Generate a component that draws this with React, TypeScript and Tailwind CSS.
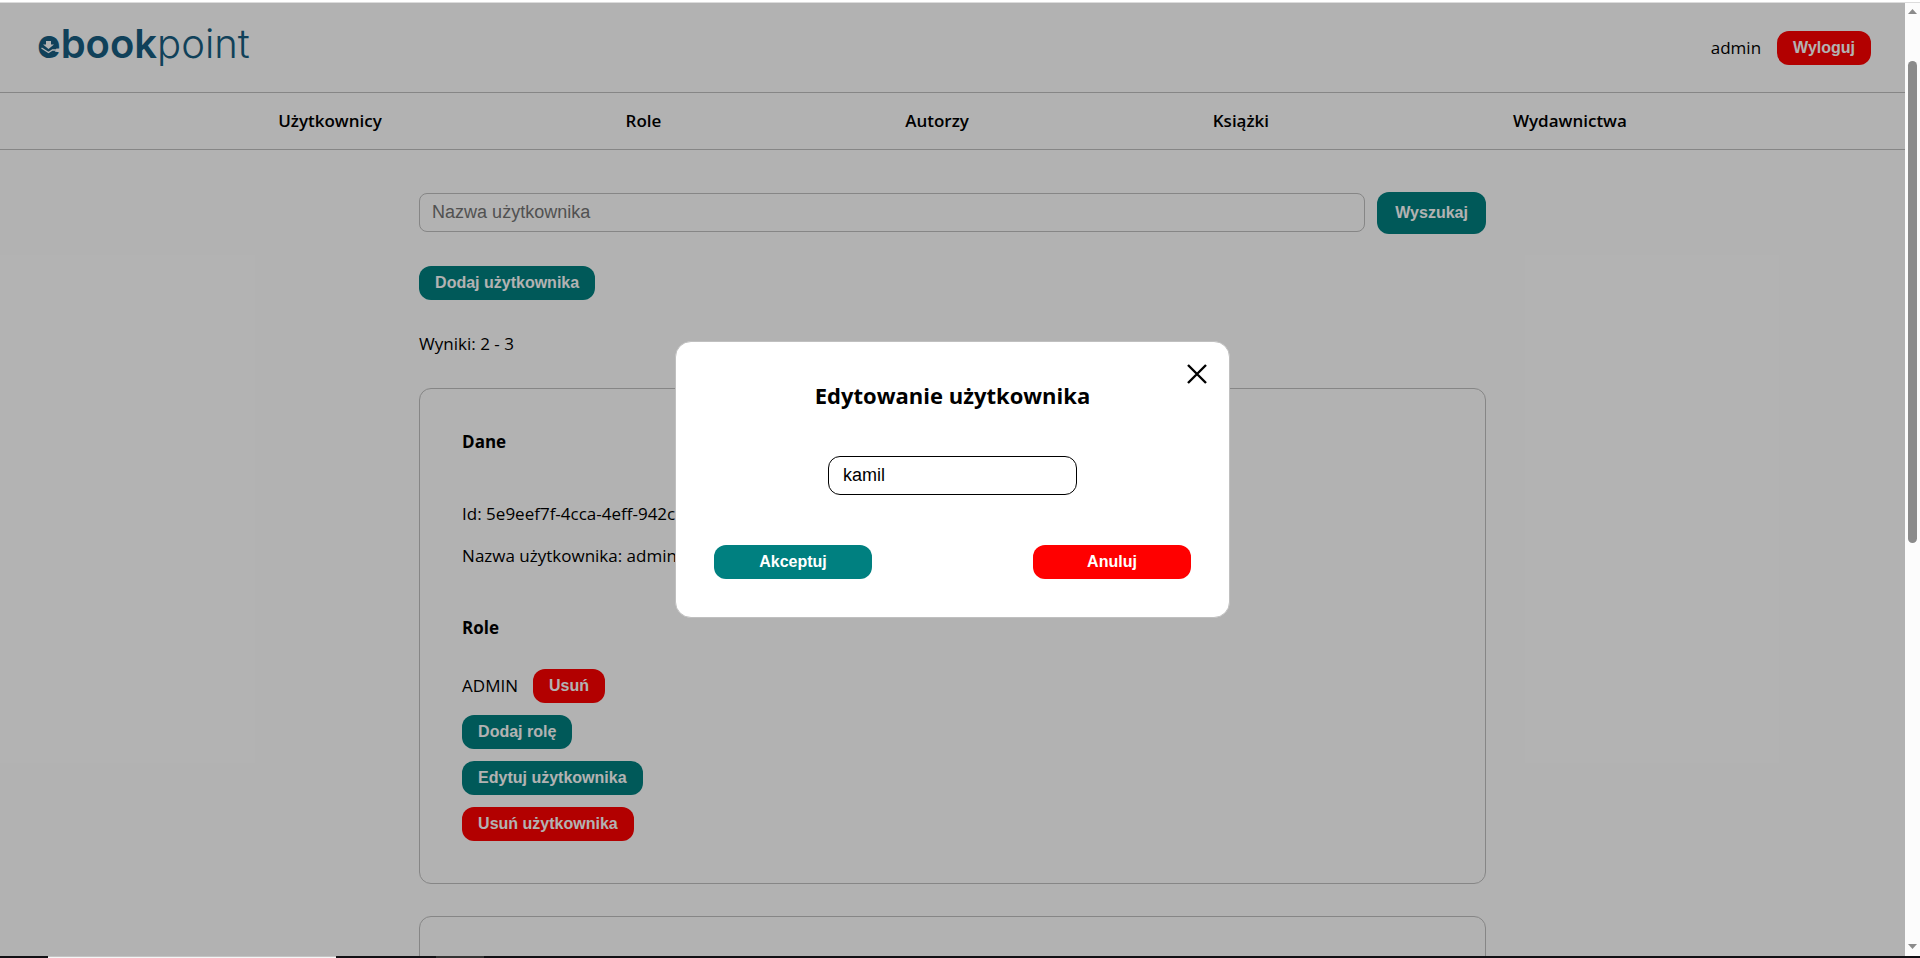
import React, { useState } from "react";

type Tone = "teal" | "red";

const tones: Record<Tone, string> = {
  teal: "bg-[#008080]",
  red: "bg-[#ff0000]",
};

function Button({
  tone,
  className = "px-4 h-[34px]",
  children,
}: {
  tone: Tone;
  className?: string;
  children: React.ReactNode;
}) {
  return (
    <button
      type="button"
      className={`rounded-xl font-['Liberation_Sans',Arial,sans-serif] text-base font-bold text-white ${tones[tone]} ${className}`}
    >
      {children}
    </button>
  );
}

function Logo() {
  return (
    <a
      href="#"
      className="relative block font-['Inter',sans-serif] text-[40px] leading-[46px] text-[#185d81]"
    >
      <span className="font-semibold">ebook</span>
      <span className="font-light">point</span>
      <svg
        viewBox="0 0 24 24"
        className="absolute top-[15px] left-0 size-6"
        aria-hidden="true"
      >
        <ellipse cx="11.5" cy="11" rx="8" ry="8" fill="currentColor" />
        <path d="M9 5h5v3.5h3L11.5 13L6 8.5h3z" fill="#fff" />
        <path d="M4.5 12l7 4.5l4-2.5h8" fill="none" stroke="#fff" strokeWidth="1.4" />
      </svg>
    </a>
  );
}

const links = ["Użytkownicy", "Role", "Autorzy", "Książki", "Wydawnictwa"];

function Scrollbar() {
  return (
    <div className="flex w-[15px] shrink-0 flex-col items-center bg-[#fcfcfc] pt-1.5 pb-[7px]" aria-hidden="true">
      <svg viewBox="0 0 9 5" className="h-[5px] w-[9px]">
        <path d="M0 5L4.5 0L9 5z" fill="#8b8b8b" />
      </svg>
      <div className="flex w-full grow flex-col items-center pt-[47px]">
        <div className="h-[54.6%] w-[9px] rounded-full bg-[#8b8b8b]" />
      </div>
      <svg viewBox="0 0 9 5" className="h-[5px] w-[9px]">
        <path d="M0 0L4.5 5L9 0z" fill="#8b8b8b" />
      </svg>
    </div>
  );
}

function EditDialog() {
  const [name, setName] = useState("kamil");
  return (
    <div className="absolute inset-0 flex items-center justify-center bg-black/30">
      <div
        role="dialog"
        aria-labelledby="dialog-title"
        className="relative flex w-[555px] flex-col items-center rounded-2xl border border-[#c0c0c0] bg-white px-[38px] pt-[37px] pb-[38px]"
      >
        <button type="button" aria-label="Zamknij" className="absolute top-[22px] right-[22px]">
          <svg viewBox="0 0 20 20" className="size-5">
            <path d="M1 1l18 18M19 1L1 19" fill="none" stroke="#000" strokeWidth="2.4" />
          </svg>
        </button>
        <h2 id="dialog-title" className="text-[22px] leading-8 font-bold">
          Edytowanie użytkownika
        </h2>
        <input
          aria-label="Nazwa"
          value={name}
          onChange={(e) => setName(e.target.value)}
          className="mt-[45px] h-[39px] w-[249px] rounded-xl border border-black px-3.5 font-['Liberation_Sans',Arial,sans-serif] text-lg outline-none"
        />
        <div className="mt-[50px] flex w-full justify-between">
          <Button tone="teal" className="h-[34px] w-[158px]">Akceptuj</Button>
          <Button tone="red" className="h-[34px] w-[158px]">Anuluj</Button>
        </div>
      </div>
    </div>
  );
}

export default function App() {
  return (
    <div className="flex h-screen flex-col bg-white font-['Open_Sans','Noto_Sans',sans-serif] text-[17px] leading-6 text-black">
      <div className="h-[3px] shrink-0 border-b border-[#dcdcdc]" />
      <div className="flex min-h-0 grow">
        <div className="relative flex min-w-0 grow flex-col overflow-hidden">
          <header className="flex h-[90px] shrink-0 items-start justify-between border-b border-[#c0c0c0] pt-[18px] pr-[34px] pl-[37px]">
            <Logo />
            <div className="flex items-center gap-4 pt-2.5">
              <span>admin</span>
              <Button tone="red">Wyloguj</Button>
            </div>
          </header>
          <nav className="flex h-[57px] shrink-0 items-center justify-between border-b border-[#c0c0c0] px-[14.6%] font-semibold">
            {links.map((l) => (
              <a key={l} href="#">{l}</a>
            ))}
          </nav>
          <main className="mx-auto w-[56%] pt-[42px]">
            <form className="flex items-center gap-3">
              <input
                aria-label="Nazwa użytkownika"
                placeholder="Nazwa użytkownika"
                className="mb-0.5 h-[39px] min-w-0 grow rounded-lg border border-[#c0c0c0] px-3 font-['Liberation_Sans',Arial,sans-serif] text-lg placeholder:text-[#757575]"
              />
              <Button tone="teal" className="h-[42px] px-[18px]">Wyszukaj</Button>
            </form>
            <div className="mt-8 flex">
              <Button tone="teal">Dodaj użytkownika</Button>
            </div>
            <p className="mt-8">Wyniki: 2 - 3</p>
            <section className="mt-8 flex flex-col items-start rounded-xl border border-[#c0c0c0] px-[42px] pt-[41px] pb-[42px]">
              <h3 className="font-bold">Dane</h3>
              <p className="mt-12">Id: 5e9eef7f-4cca-4eff-942c</p>
              <p className="mt-[18px]">Nazwa użytkownika: admin</p>
              <h3 className="mt-12 font-bold">Role</h3>
              <div className="mt-[29px] flex items-center gap-[15px]">
                <span>ADMIN</span>
                <Button tone="red">Usuń</Button>
              </div>
              <div className="mt-3 flex flex-col items-start gap-3">
                <Button tone="teal">Dodaj rolę</Button>
                <Button tone="teal">Edytuj użytkownika</Button>
                <Button tone="red">Usuń użytkownika</Button>
              </div>
            </section>
            <section className="mt-8 h-40 rounded-xl border border-[#c0c0c0]" />
          </main>
          <EditDialog />
        </div>
        <Scrollbar />
      </div>
      <div className="flex h-0.5 shrink-0 bg-[#111014]">
        <div className="ml-12 w-72 border-t border-[#c4c4c4] bg-[#f5f5f5]" />
        <div className="ml-[100px] w-12 bg-[#333]" />
      </div>
    </div>
  );
}
